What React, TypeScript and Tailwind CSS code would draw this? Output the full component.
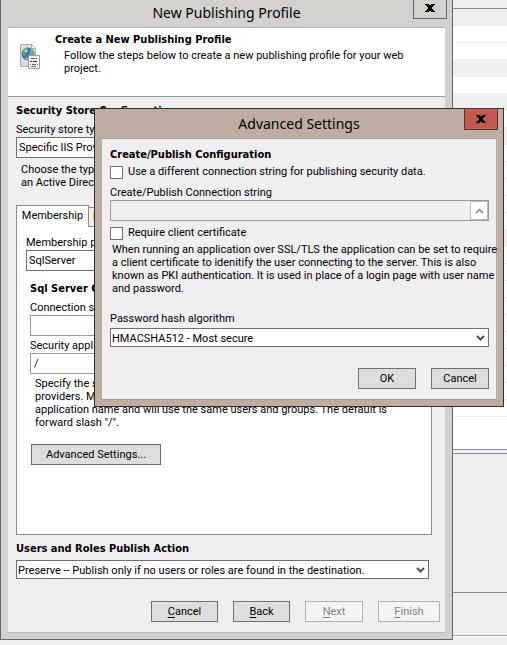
import type { ReactNode } from "react";
import clsx from "clsx";

function Heading({ children }: { children: ReactNode }) {
  return (
    <h2 className="pt-[2px] font-['DejaVu_Sans_Condensed','DejaVu_Sans',sans-serif] text-[11px] leading-[14px] font-bold">
      {children}
    </h2>
  );
}

function CloseButton({ className }: { className: string }) {
  return (
    <button
      type="button"
      aria-label="Close"
      className={clsx("flex h-[22px] w-[34px] items-center justify-center border", className)}
    >
      <svg width="10" height="8" viewBox="0 0 10 8" shapeRendering="crispEdges">
        <path
          d="M0 0h4v1h2V0h4v1H9v1H8v1H7v2h1v1h1v1h1v1H6V7H4v1H0V7h1V6h1V5h1V3H2V2H1V1H0z"
          fill="#000"
        />
      </svg>
    </button>
  );
}

function Select({ id, value, className }: { id: string; value: string; className: string }) {
  return (
    <div className="relative">
      <select
        id={id}
        defaultValue={value}
        className={clsx("block w-full appearance-none border border-[#707070] bg-white pt-[2px] text-black", className)}
      >
        <option>{value}</option>
      </select>
      <svg
        className="pointer-events-none absolute top-1/2 right-1 -translate-y-1/2"
        width="9"
        height="7"
        viewBox="0 0 9 7"
      >
        <path d="M1 1.5l3.5 3.5L8 1.5" fill="none" stroke="#505050" strokeWidth="2" />
      </svg>
    </div>
  );
}

function PushButton({
  children,
  className,
  disabled = false,
}: {
  children: ReactNode;
  className: string;
  disabled?: boolean;
}) {
  return (
    <button
      type="button"
      disabled={disabled}
      className={clsx(
        "h-[21px] border leading-[19px]",
        disabled ? "border-[#adb2b5] bg-[#f4f4f4] text-[#838383]" : "border-[#707070] bg-[#dddddd]",
        className,
      )}
    >
      {children}
    </button>
  );
}

function Key({ children }: { children: string }) {
  return <span className="underline underline-offset-2">{children}</span>;
}

function ProfileIcon() {
  return (
    <svg className="shrink-0" width="20" height="25" viewBox="0 0 20 25">
      <path d="M.5.5h11l4 4v18H.5z" fill="#dcdce6" stroke="#a9a9b8" />
      <path d="M11.5.5v4h4z" fill="#fff" stroke="#a9a9b8" />
      <circle cx="8" cy="10" r="6.5" fill="#3f6fc4" />
      <path d="M3 6c2-2.500 4-2.500 5-2l-1 3-2 1 1 3-2 1-2-2z" fill="#5fae4a" />
      <path d="M10 4l3 2 1 4-3 3-2-2 1-3z" fill="#6cba50" />
      <path d="M5 13l3 1 0 2-2-1z" fill="#8ecb70" />
      <circle cx="6" cy="7" r="1.500" fill="#b9d4f3" />
      <path d="M8.500 11.500h11v13h-11z" fill="#f4f4fa" stroke="#9a9aac" />
      <path d="M11 14.500h4M12 20.500h4" stroke="#7d3fb0" />
      <path d="M10 17.500h2M13 17.500h4M16 14.500h1" stroke="#333" />
      <path d="M10 20.500h1M17 20.500h1M11 22.500h5" stroke="#3a8f6a" />
    </svg>
  );
}

const rows = [true, false, false, true, false, true, false, true, false, false, false, false, false, true];

function Backdrop() {
  return (
    <main className="flex min-h-screen flex-col bg-[#efefef] pt-2">
      <div className="border-y border-[#858892] bg-white pb-8">
        {rows.map((shaded, i) => (
          <div key={i} className={clsx("h-[17px] border-b border-[#efefef]", shaded && "bg-[#efefef]")} />
        ))}
        {Array.from({ length: 10 }, (_, i) => (
          <div key={i} className="h-[17px] border-b border-[#efefef]" />
        ))}
      </div>
      <div className="mt-[3px] h-[140px] border-y border-[#858892]" />
      <div className="h-[43px] border-b border-[#a5a7ac]" />
      <div className="h-px bg-white" />
    </main>
  );
}

function PublishingWindow() {
  return (
    <section className="absolute top-0 left-0 w-[453px] border-x border-b border-[#62636b] bg-[#d2d1cd] px-[7px] pb-[6px]">
      <header className="relative h-[27px]">
        <h1 className="text-center font-['Noto_Sans','Open_Sans',sans-serif] text-[14px] leading-[26px]">
          New Publishing Profile
        </h1>
        <div className="absolute -top-[3px] -right-[2px]">
          <CloseButton className="border-[#62636b] bg-[#d2d1cd]" />
        </div>
      </header>
      <div className="border-y border-[#b8b8b8] bg-[#efefef]">
        <div className="flex h-[69px] border-b border-[#9a9a9a] bg-white pt-[3px] pl-[12px]">
          <div className="w-[35px] pt-[13px]">
            <ProfileIcon />
          </div>
          <div>
            <Heading>Create a New Publishing Profile</Heading>
            <p className="pt-[2px] pl-[9px] leading-[13px]">
              Follow the steps below to create a new publishing profile for your web
              <br />
              project.
            </p>
          </div>
        </div>

        <form className="pt-[5px] pr-[5px] pb-[10px] pl-[8px]">
          <div className="pr-[11px]">
            <Heading>Security Store Configuration</Heading>
            <label htmlFor="store" className="block pt-1 leading-[15px]">
              Security store type
            </label>
            <Select id="store" value="Specific IIS Provider" className="h-[21px] px-[2px]" />
            <p className="pt-[5px] pl-[5px] leading-[13px]">
              Choose the type of store:
              <br />
              an Active Directory
            </p>
            <div role="tablist" className="flex items-end pt-[16px]">
              <button
                type="button"
                role="tab"
                aria-selected="true"
                className="z-10 -mb-px h-[22px] w-[73px] border border-b-0 border-[#8b8b96] bg-white"
              >
                Membership
              </button>
              <button
                type="button"
                role="tab"
                aria-selected="false"
                className="h-[19px] w-[54px] border border-b-0 border-l-0 border-[#8b8b96] bg-[#efefef] pl-[4px] text-left"
              >
                Roles
              </button>
            </div>
          </div>
          <div className="mr-[8px] h-[309px] border border-[#8b8b96] bg-white pt-[9px] pl-[9px]">
            <label htmlFor="provider" className="block leading-[14px]">
              Membership provider
            </label>
            <div className="w-[380px]">
              <Select id="provider" value="SqlServer" className="h-[21px] px-[2px]" />
            </div>
            <div className="pt-[9px] pl-[4px]">
              <Heading>Sql Server Configuration</Heading>
              <label htmlFor="connection" className="block pt-[4px] leading-[15px]">
                Connection string
              </label>
              <input id="connection" className="block h-[21px] w-[376px] border border-[#9a9a9a] bg-white px-[3px]" />
              <label htmlFor="application" className="block pt-[2px] leading-[15px]">
                Security application name
              </label>
              <input
                id="application"
                defaultValue="/"
                className="block h-[21px] w-[376px] border border-[#9a9a9a] bg-white px-[3px]"
              />
              <p className="pt-[3px] pl-[5px] leading-[13px]">
                Specify the security application name for the
                <br />
                providers. Multiple applications can share an
                <br />
                application name and will use the same users and groups. The default is
                <br />
                forward slash "/".
              </p>
              <div className="pt-[15px] pl-px">
                <PushButton className="w-[130px]">Advanced Settings...</PushButton>
              </div>
            </div>
          </div>
          <div className="pt-[5px] pr-[11px]">
            <Heading>Users and Roles Publish Action</Heading>
            <div className="pt-[4px]">
              <Select
                id="action"
                value="Preserve -- Publish only if no users or roles are found in the destination."
                className="h-[19px] px-px"
              />
            </div>
          </div>
          <div className="flex justify-end gap-[15px] pt-[22px]">
            <PushButton className="w-[67px]">
              <Key>C</Key>ancel
            </PushButton>
            <PushButton className="w-[57px]">
              <Key>B</Key>ack
            </PushButton>
            <PushButton disabled className="w-[58px]">
              <Key>N</Key>ext
            </PushButton>
            <PushButton disabled className="w-[62px]">
              <Key>F</Key>inish
            </PushButton>
          </div>
        </form>
      </div>
    </section>
  );
}

function AdvancedDialog() {
  return (
    <section
      role="dialog"
      aria-labelledby="advanced-title"
      className="absolute top-[108px] left-[94px] z-20 w-[410px] border border-[#302f36] bg-[#bdaea1] px-[7px] pb-[6px]"
    >
      <header className="relative h-[29px]">
        <h1
          id="advanced-title"
          className="text-center font-['Noto_Sans','Open_Sans',sans-serif] text-[14px] leading-[30px]"
        >
          Advanced Settings
        </h1>
        <div className="absolute -top-px -right-[2px]">
          <CloseButton className="border-[#5d3432] bg-[#c4594f]" />
        </div>
      </header>
      <form className="border-y border-[#9d9ca8] bg-[#efefef] pt-[7px] pr-[7px] pb-[10px] pl-[8px]">
        <Heading>Create/Publish Configuration</Heading>
        <label className="flex items-center gap-[5px] pt-[3px] leading-[14px]">
          <input type="checkbox" className="size-[13px] appearance-none border border-[#707070] bg-white" />
          Use a different connection string for publishing security data.
        </label>
        <label htmlFor="publish-connection" className="block pt-[7px] leading-[14px]">
          Create/Publish Connection string
        </label>
        <div className="flex h-[21px] border border-[#9a9a9a]">
          <input id="publish-connection" disabled className="min-w-0 flex-1 bg-[#efefef] px-[3px]" />
          <button
            type="button"
            aria-label="Edit connection string"
            className="flex w-[18px] items-center justify-center border border-[#bcbcbc] bg-white"
          >
            <svg width="9" height="6" viewBox="0 0 9 6">
              <path d="M1 5l3.500-3.500L8 5" fill="none" stroke="#808080" strokeWidth="1.500" />
            </svg>
          </button>
        </div>
        <label className="flex items-center gap-[5px] pt-[5px] leading-[14px]">
          <input type="checkbox" className="size-[13px] appearance-none border border-[#707070] bg-white" />
          Require client certificate
        </label>
        <p className="pt-[3px] pl-[2px] leading-[13px] whitespace-nowrap">
          When running an application over SSL/TLS the application can be set to require
          <br />
          a client certificate to idenitify the user connecting to the server. This is also
          <br />
          known as PKI authentication. It is used in place of a login page with user name
          <br />
          and password.
        </p>
        <label htmlFor="hash" className="block pt-[17px] pb-[2px] leading-[14px]">
          Password hash algorithm
        </label>
        <Select id="hash" value="HMACSHA512 - Most secure" className="h-[19px] px-px" />
        <div className="flex justify-end gap-[15px] pt-[21px]">
          <PushButton className="w-[58px]">OK</PushButton>
          <PushButton className="w-[58px]">Cancel</PushButton>
        </div>
      </form>
    </section>
  );
}

export default function App() {
  return (
    <div className="relative min-h-screen overflow-hidden bg-[#efefef] font-['Roboto','Noto_Sans',sans-serif] text-[11px] text-black">
      <Backdrop />
      <PublishingWindow />
      <AdvancedDialog />
    </div>
  );
}
